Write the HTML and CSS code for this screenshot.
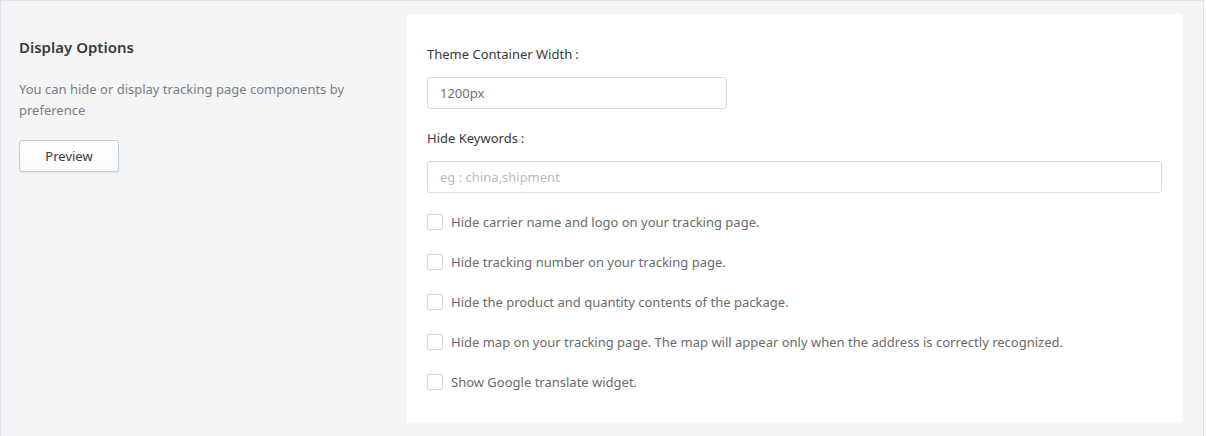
FILE: index.html
```html
<!DOCTYPE html>
<html lang="en">
<head>
  <meta charset="UTF-8" />
  <title>Display Options</title>
  <link rel="stylesheet" href="styles.css">
</head>
<body>
  <div class="settings">
    <div class="settings-info">
      <h2 class="settings-title">Display Options</h2>
      <p class="settings-desc">You can hide or display tracking page components by preference</p>
      <button class="btn">Preview</button>
    </div>

    <div class="settings-card">
      <div class="field">
        <label class="field-label">Theme Container Width<span class="colon">:</span></label>
        <input class="text-input narrow" type="text" value="1200px" />
      </div>
      <div class="field">
        <label class="field-label">Hide Keywords<span class="colon">:</span></label>
        <input class="text-input" type="text" placeholder="eg : china,shipment" />
      </div>

      <ul class="check-list">
        <li><label><input type="checkbox" /> Hide carrier name and logo on your tracking page.</label></li>
        <li><label><input type="checkbox" /> Hide tracking number on your tracking page.</label></li>
        <li><label><input type="checkbox" /> Hide the product and quantity contents of the package.</label></li>
        <li><label><input type="checkbox" /> Hide map on your tracking page. The map will appear only when the address is correctly recognized.</label></li>
        <li><label><input type="checkbox" /> Show Google translate widget.</label></li>
      </ul>
    </div>
  </div>
</body>
</html>
```

FILE: styles.css
```css
* {
  box-sizing: border-box;
}

html, body {
  margin: 0;
  background: #fff;
  font-family: "Noto Sans", "Open Sans", Arial, sans-serif;
  font-size: 13px;
  color: #333;
}

.settings {
  display: flex;
  align-items: flex-start;
  width: 1204px;
  min-height: 436px;
  background: #f4f5f7;
  border: 1px solid #e1e3e6;
  border-bottom: none;
}

.settings-info {
  width: 406px;
  padding: 36px 18px 0;
}

.settings-title {
  margin: 0;
  font-size: 15px;
  font-weight: 600;
  line-height: 20px;
  color: #3a3a3a;
}

.settings-desc {
  margin: 22px 0 0;
  line-height: 21px;
  color: #7d7d7d;
  padding-right: 40px;
}

.btn {
  margin-top: 19px;
  width: 100px;
  height: 32px;
  font-family: inherit;
  font-size: 13px;
  color: #3a3a3a;
  background: linear-gradient(#fff, #f9fafb);
  border: 1px solid #c4cdd5;
  border-radius: 3px;
  box-shadow: 0 1px 1px rgba(22, 29, 37, 0.05);
}

.settings-card {
  width: 775px;
  height: 408px;
  margin-top: 13px;
  padding: 30px 20px 0;
  background: #fff;
}

.field {
  margin-bottom: 19px;
}

.field-label {
  display: block;
  line-height: 20px;
  margin-bottom: 13px;
  color: #3a3a3a;
}

.colon {
  margin-left: 3px;
}

.text-input {
  display: block;
  width: 100%;
  height: 32px;
  padding: 0 12px;
  font-family: inherit;
  font-size: 13px;
  color: #707070;
  border: 1px solid #d9d9d9;
  border-radius: 3px;
  outline: none;
}

.text-input.narrow {
  width: 300px;
}

.text-input::placeholder {
  color: #bbb;
}

.check-list {
  list-style: none;
  margin: -1px 0 0;
  padding: 0;
}

.check-list li {
  line-height: 20px;
  margin-top: 20px;
  color: #6b6b6b;
}

.check-list label {
  display: flex;
  align-items: center;
}

.check-list input {
  appearance: none;
  width: 16px;
  height: 16px;
  margin: 0 8px 0 0;
  border: 1px solid #d6d6d6;
  border-radius: 2px;
  background: #fff;
}
```
